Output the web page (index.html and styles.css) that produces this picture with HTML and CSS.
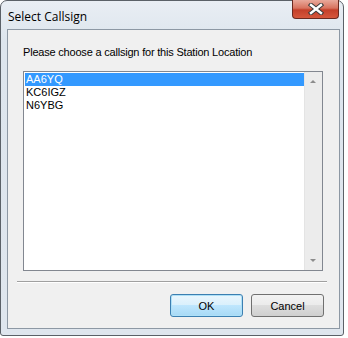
FILE: index.html
```html
<!DOCTYPE html>
<html lang="en">

<head>
    <meta charset="UTF-8">
    <title>Select Callsign</title>
    <link rel="stylesheet" href="styles.css">
</head>

<body>

    <div class="window">
        <div class="titlebar">
            <span class="title">Select Callsign</span>
            <div class="close-btn">
                <svg width="18" height="12" viewBox="0 0 18 12">
                    <path d="M4 2 L14 10 M14 2 L4 10" stroke="#3a3a3a" stroke-width="4.4" stroke-linecap="square" fill="none"/>
                    <path d="M4 2 L14 10 M14 2 L4 10" stroke="#ffffff" stroke-width="2.4" stroke-linecap="square" fill="none"/>
                </svg>
            </div>
        </div>

        <div class="client">
            <div class="prompt">Please choose a callsign for this Station Location</div>

            <div class="listbox">
                <ul class="items">
                    <li class="selected">AA6YQ</li>
                    <li>KC6IGZ</li>
                    <li>N6YBG</li>
                </ul>
                <div class="scrollbar">
                    <span class="arrow up"></span>
                    <span class="arrow down"></span>
                </div>
            </div>

            <div class="separator"></div>

            <div class="buttons">
                <button class="btn default">OK</button>
                <button class="btn">Cancel</button>
            </div>
        </div>
    </div>

</body>

</html>
```

FILE: styles.css
```css
body {
    margin: 0;
    padding: 0;
    background-color: #fff;
    font-family: 'Liberation Sans', Arial, sans-serif;
}

.window {
    width: 342px;
    height: 334px;
    border: 1px solid #5b6168;
    border-radius: 7px 7px 3px 3px;
    background: linear-gradient(#e9eef4, #dde5ed 40px, #dfe6ee);
    position: relative;
}

.titlebar {
    height: 28px;
    display: flex;
    align-items: center;
}

.title {
    font-family: 'Open Sans', sans-serif;
    font-size: 12px;
    color: #000;
    margin-left: 7px;
    margin-top: 2px;
}

.close-btn {
    position: absolute;
    top: -1px;
    right: 4px;
    width: 45px;
    height: 18px;
    border: 1px solid #6b2a20;
    border-top: none;
    border-radius: 0 0 4px 4px;
    background: linear-gradient(#e9a99b, #d8735f 45%, #c4402a 55%, #d6573c);
    display: flex;
    align-items: center;
    justify-content: center;
}

.client {
    margin-left: 6px;
    width: 331px;
    height: 298px;
    border: 1px solid #8d98a4;
    background-color: #f0f0f0;
    font-size: 11px;
    color: #000;
}

.prompt {
    margin: 16px 0 0 15px;
    height: 13px;
    line-height: 13px;
    letter-spacing: -0.2px;
}

.listbox {
    margin: 12px 0 0 15px;
    width: 298px;
    height: 198px;
    border: 1px solid #828790;
    background-color: #fff;
    display: flex;
}

.items {
    list-style: none;
    margin: 1px 0 0 1px;
    padding: 0;
    flex: 1;
}

.items li {
    height: 13px;
    line-height: 13px;
    padding-left: 1px;
}

.items li.selected {
    background-color: #3399ff;
    color: #fff;
}

.scrollbar {
    width: 17px;
    background-color: #ececec;
    border-left: 1px solid #e4e4e4;
    position: relative;
}

.arrow {
    position: absolute;
    left: 5px;
    width: 0;
    height: 0;
    border-left: 3px solid transparent;
    border-right: 3px solid transparent;
}

.arrow.up {
    top: 8px;
    border-bottom: 3px solid #8c8c8c;
}

.arrow.down {
    bottom: 8px;
    border-top: 3px solid #8c8c8c;
}

.separator {
    margin: 10px 0 0 9px;
    width: 310px;
    height: 1px;
    background-color: #a0a0a0;
    border-bottom: 1px solid #fff;
}

.buttons {
    display: flex;
    justify-content: flex-end;
    gap: 8px;
    margin: 11px 15px 0 0;
}

.btn {
    width: 73px;
    height: 23px;
    font-family: 'Liberation Sans', Arial, sans-serif;
    font-size: 11px;
    color: #000;
    border: 1px solid #707070;
    border-radius: 3px;
    background: linear-gradient(#f2f2f2, #ebebeb 50%, #dddddd 50%, #cfcfcf);
    padding: 0;
}

.btn.default {
    border-color: #3c7fb1;
    background: linear-gradient(#eaf6fd, #d9f0fc 50%, #bee6fd 50%, #a7d9f5);
    box-shadow: inset 0 0 0 1px #aee0f7;
}
```
